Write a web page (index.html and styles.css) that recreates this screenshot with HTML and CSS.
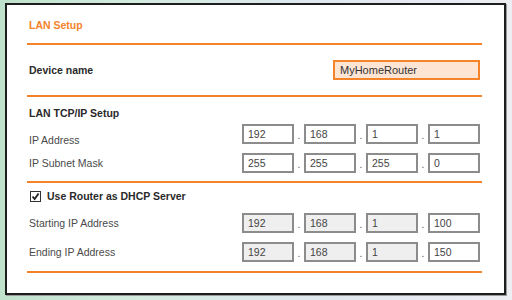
FILE: index.html
```
<!DOCTYPE html>
<html>
<head>
<meta charset="utf-8">
<link rel="stylesheet" href="styles.css">
</head>
<body>
<div class="panel">
  <div class="head">LAN Setup</div>
  <div class="device">
    <span class="blabel">Device name</span>
    <span class="dname">MyHomeRouter</span>
  </div>
  <div class="sec tcp">
    <div class="title">LAN TCP/IP Setup</div>
    <div class="iprow first">
      <span class="label low">IP Address</span>
      <div class="ip">
        <span class="oct">192</span><span class="dot">.</span><span class="oct">168</span><span class="dot">.</span><span class="oct">1</span><span class="dot">.</span><span class="oct">1</span>
      </div>
    </div>
    <div class="iprow">
      <span class="label">IP Subnet Mask</span>
      <div class="ip">
        <span class="oct">255</span><span class="dot">.</span><span class="oct">255</span><span class="dot">.</span><span class="oct">255</span><span class="dot">.</span><span class="oct">0</span>
      </div>
    </div>
  </div>
  <div class="sec dhcp">
    <div class="check">
      <svg class="cb" width="11" height="11" viewBox="0 0 11 11"><rect x="0.5" y="0.5" width="10" height="10" fill="#fff" stroke="#333" stroke-width="1"/><path d="M2.5 5.5 L4.6 8 L8.6 2.4" fill="none" stroke="#222" stroke-width="1.8"/></svg>
      <span class="blabel">Use Router as DHCP Server</span>
    </div>
    <div class="iprow first">
      <span class="label">Starting IP Address</span>
      <div class="ip">
        <span class="oct dis">192</span><span class="dot">.</span><span class="oct dis">168</span><span class="dot">.</span><span class="oct dis">1</span><span class="dot">.</span><span class="oct">100</span>
      </div>
    </div>
    <div class="iprow">
      <span class="label">Ending IP Address</span>
      <div class="ip">
        <span class="oct dis">192</span><span class="dot">.</span><span class="oct dis">168</span><span class="dot">.</span><span class="oct dis">1</span><span class="dot">.</span><span class="oct">150</span>
      </div>
    </div>
  </div>
</div>
</body>
</html>
```

FILE: styles.css
```
html, body {
  margin: 0;
  padding: 0;
}
body {
  width: 512px;
  height: 300px;
  overflow: hidden;
  font-family: "Liberation Sans", Arial, sans-serif;
  background: linear-gradient(90deg, #bfe2cc 0%, #d3ebdf 25%, #dce8ec 55%, #e6e9f1 80%, #eceef3 100%);
  padding-top: 3px;
  box-sizing: border-box;
}
.panel {
  margin-left: 5px;
  width: 455px;
  height: 288px;
  border: 2px solid #1e1e1e;
  background: #fff;
  padding: 0 22px 0 20px;
  box-shadow: 1px 1px 0 #9a9a9a;
}
.head {
  padding: 13px 0 11px 2px;
  line-height: 14px;
  font-size: 10.5px;
  font-weight: bold;
  color: #f5832a;
  border-bottom: 2px solid #f5832a;
}
.device {
  height: 50px;
  display: flex;
  align-items: center;
  justify-content: space-between;
  padding: 0 2px;
  border-bottom: 2px solid #f5832a;
}
.blabel {
  font-size: 10.5px;
  font-weight: bold;
  color: #2a2a2a;
  line-height: 14px;
}
.dname {
  width: 147px;
  height: 20px;
  box-sizing: border-box;
  border: 2px solid #f5832a;
  background: #fde4d3;
  font-size: 11px;
  color: #333;
  line-height: 16px;
  padding-left: 5px;
}
.sec {
  border-bottom: 2px solid #f5832a;
}
.tcp {
  padding: 9px 0 8px;
}
.dhcp {
  padding: 6px 0 9px;
}
.title {
  padding-left: 2px;
  font-size: 10.5px;
  font-weight: bold;
  color: #2a2a2a;
  line-height: 14px;
}
.iprow {
  height: 20px;
  display: flex;
  align-items: center;
  justify-content: space-between;
  padding: 0 2px;
  margin-top: 9px;
}
.tcp .iprow.first {
  margin-top: 4px;
}
.dhcp .iprow.first {
  margin-top: 10px;
}
.label {
  font-size: 10.5px;
  color: #4a4a4a;
  line-height: 14px;
}
.label.low {
  margin-top: 12px;
}
.ip {
  display: flex;
  height: 20px;
}
.oct {
  width: 52px;
  height: 20px;
  box-sizing: border-box;
  border: 2px solid #8c8c8c;
  background: #fff;
  font-size: 10.5px;
  color: #444;
  line-height: 16px;
  padding-left: 4px;
}
.oct.dis {
  background: #efefef;
}
.dot {
  width: 10px;
  text-align: center;
  font-size: 10px;
  color: #555;
  line-height: 24px;
}
.check {
  display: flex;
  align-items: center;
  height: 14px;
  padding-left: 3px;
}
.cb {
  margin-right: 6px;
}
```
